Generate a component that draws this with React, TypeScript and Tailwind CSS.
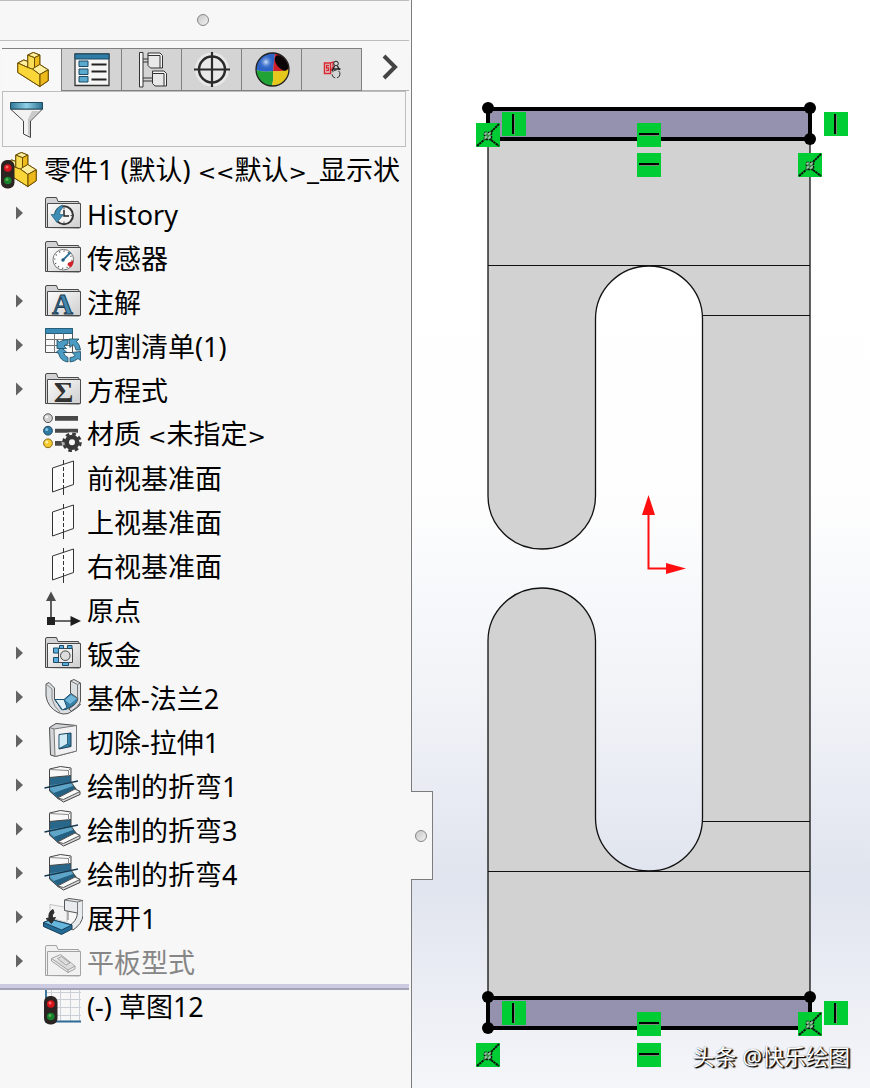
import { ReactNode, useState } from 'react'
import clsx from 'clsx'

type TreeItem = {
  label: string
  icon: ReactNode
  expandable?: boolean
  muted?: boolean
}

function Icon({ children, height = 44 }: { children: ReactNode; height?: number }) {
  return (
    <svg width="40" height={height} viewBox={`0 0 40 ${height}`} className="shrink-0" fill="none" aria-hidden="true">
      {children}
    </svg>
  )
}

function Folder({ children, faded }: { children: ReactNode; faded?: boolean }) {
  const stroke = faded ? '#a3a3a3' : '#4a4a4a'
  return (
    <Icon>
      <path d="M2.500 35.500V7q0-1.500 1.500-1.500h9.500l1.500 4h20.500l1 2.500v24z" fill={faded ? '#f0f0f0' : '#d3d3d5'} stroke={stroke} />
      <path d="M4.500 11.500H37.500V35.500H4.500z" fill={faded ? '#f1f1f1' : 'url(#folderFace)'} stroke={stroke} />
      {children}
    </Icon>
  )
}

function TrafficLight({ x, y }: { x: number; y: number }) {
  return (
    <g transform={`translate(${x} ${y})`}>
      <rect width="13.500" height="28.500" rx="6" fill="#2b2423" />
      <circle cx="6.800" cy="8" r="3.800" fill="#d8141c" />
      <circle cx="6" cy="7" r="1.500" fill="#ff6a66" />
      <circle cx="6.800" cy="20.500" r="3.800" fill="#17802a" />
      <circle cx="6" cy="19.500" r="1.500" fill="#55b058" />
    </g>
  )
}

function PartShape() {
  return (
    <g stroke="#6b4d00" strokeLinejoin="round">
      <path d="M3.800 11L9.800 8l4 1.500V3l5.500-2.500L25.800 3v9.500l8.400 5.300v11L25.800 34.500l-22-14z" fill="#f5c92c" />
      <path d="M3.800 11L9.800 8l4 1.500v6z" fill="#fff0a0" />
      <path d="M13.800 3l6.700 2.500v13.300L13.800 15.500z" fill="#f9dc55" />
      <path d="M20.500 5.500L25.800 3v9.500l-5.300 3.500z" fill="#eebb1c" />
      <path d="M13.800 3l5.500-2.500L25.800 3l-5.300 2.500z" fill="#fff0a0" />
      <path d="M18.300 17L25.800 12.500l8.400 5.300-8.400 4.700z" fill="#fff0a0" />
      <path d="M25.800 22.500l8.400-4.700v11L25.800 34.500z" fill="#edb81a" />
      <path d="M3.800 11l10 4.500 4.500 1.500 7.500 5.500v12l-22-14z" fill="#fbd638" />
    </g>
  )
}

function PlaneIcon() {
  return (
    <Icon>
      <path d="M9.500 12L30.500 5v23.500L9.500 36z" fill="#fcfcfc" stroke="#333" />
      <path d="M20.500 4v5M20.500 33v6" stroke="#333" />
      <path d="M20.500 11v22" stroke="#333" strokeDasharray="4 2" />
    </Icon>
  )
}

function BendIcon() {
  return (
    <Icon>
      <path d="M6.500 13L28 11v8l6 6.500L16 35.500 6.500 27z" fill="#2d7299" />
      <path d="M6.500 14l19-1.500 2.500-1V18l-21.500 3z" fill="#286789" />
      <path d="M6.500 21.500L28 18l3 4-20 7-4.500-4z" fill="#5ea5c8" />
      <path d="M11 29l19-7 4 3.500-18 9z" fill="#236082" />
      <path d="M6.500 5L17.500 2.500 28 4v7.500L6.500 13.500z" fill="#f8f8f8" stroke="#444" strokeLinejoin="round" />
      <path d="M6.500 5.500l19 1L28 4M25.500 6.500v5.500" stroke="#888" />
      <path d="M6.500 13v14l9 8M28 11.500V18l5 7" stroke="#444" />
      <path d="M14.500 34L32 25l5 2.500v3L20.500 38z" fill="#d8d8d8" stroke="#444" strokeLinejoin="round" />
      <path d="M14.500 34L32 25l5 2.500-16.500 8z" fill="#fafafa" stroke="#555" strokeLinejoin="round" />
      <path d="M1.500 24L35 17" stroke="#17384e" strokeWidth="1.300" />
    </Icon>
  )
}

const historyIcon = (
  <Folder>
    <circle cx="21" cy="23.300" r="9" fill="#f4f4f4" stroke="#343434" strokeWidth="2" />
    <path d="M21 15.500v2M21 29.500v2M27.500 23.500h2" stroke="#555" />
    <path d="M21 18v6h5" stroke="#222" strokeWidth="1.500" />
    <path d="M8 22.500h3.500q1.500-7 8-9.500 1 2-.5 3.500-2.500 2.500-2.500 6h4L14 30.500z" fill="#3d8db6" stroke="#22607f" strokeWidth=".7" />
  </Folder>
)

const sensorIcon = (
  <Folder>
    <circle cx="20.300" cy="23.700" r="10.300" fill="#fff" stroke="#777" />
    <circle cx="20.300" cy="23.700" r="8.500" stroke="#555" strokeWidth="1.500" strokeDasharray="1 3.450" />
    <path d="M25 27l5-2.500q1 4-2.500 7L24.500 29z" fill="#d3202a" />
    <path d="M20 24l7.500-7.500" stroke="#2c7198" strokeWidth="1.800" />
    <circle cx="20" cy="24" r="1.700" fill="#225c7e" />
  </Folder>
)

const annotationIcon = (
  <Folder>
    <text x="19.500" y="33.500" textAnchor="middle" fontFamily="Liberation Serif, serif" fontWeight="bold" fontSize="29" fill="#4188b0" stroke="#1d3c50">A</text>
  </Folder>
)

const cutListIcon = (
  <Icon>
    <path d="M2.500 4.500h27v24h-27z" fill="#fafafa" stroke="#555" />
    <path d="M2.500 4.500h27v5h-27z" fill="#3a8ab3" stroke="#255f7e" />
    <path d="M2.500 15.500h27M2.500 21.500h27M11.500 9.500v19M20.500 9.500v19" stroke="#777" />
    <g fill="#4b9bc2" stroke="#174963" strokeWidth=".8" strokeLinejoin="round">
      <path d="M26 15h10l-2.500 2.500q3.500 3 4 8.500h-4.500q-.5-3.500-3-5.500L27 23.500z" />
      <path d="M37.500 27.500v9l-2.500-2q-3 3-8 3.500v-4.500q3 0 5-2l-3-3z" />
      <path d="M25 38q-8-1-9.500-9l-2.500-.5 5.500-5 5.500 5H20.500q1 4 4.500 5z" />
      <path d="M25 15.500v4.500q-2.500.5-4 2l2.500 2.500H14V16l2.500 2q3.500-2.500 8.500-2.500z" />
    </g>
  </Icon>
)

const equationIcon = (
  <Folder>
    <text x="20.500" y="33.500" textAnchor="middle" fontFamily="Liberation Serif, serif" fontWeight="bold" fontSize="30" fill="#333">Σ</text>
  </Folder>
)

const materialIcon = (
  <Icon>
    <path d="M12 4h23v4.700H12zM12 16.700h23v4H12zM12 29h12v4.700H12z" fill="#484848" />
    <circle cx="5" cy="6.200" r="4.400" fill="#cfcfcf" stroke="#555" />
    <circle cx="5" cy="18.700" r="4.400" fill="#2e7ba4" stroke="#1c465f" />
    <circle cx="5" cy="31.300" r="4.400" fill="#f4c92f" stroke="#876a12" />
    <circle cx="3.700" cy="5" r="1.500" fill="#f5f5f5" />
    <circle cx="3.700" cy="17.500" r="1.500" fill="#86c2de" />
    <circle cx="3.700" cy="30" r="1.500" fill="#fff0a0" />
    <circle cx="29" cy="30.300" r="10.500" fill="#f7f7f7" opacity=".6" />
    <circle cx="29" cy="30.300" r="5.300" stroke="#383838" strokeWidth="4.600" />
    <circle cx="29" cy="30.300" r="8.500" stroke="#383838" strokeWidth="2.600" strokeDasharray="3.676 3" />
  </Icon>
)

const originIcon = (
  <Icon>
    <path d="M8 33V10M8 33h22" stroke="#3a3a3a" strokeWidth="1.600" />
    <path d="M8 3.500l5 9.500H3z" fill="#4b4b4b" />
    <path d="M38 33l-10.500 5V28z" fill="#1c1c1c" />
    <path d="M4 29h8v8H4z" fill="#222" />
  </Icon>
)

const sheetMetalIcon = (
  <Folder>
    <path d="M15.500 16.500h14v14h-14z" fill="#ededed" stroke="#444" />
    <g fill="#59aede" stroke="#1d4c68">
      <path d="M16.500 13.500h4v3h-4zM24.500 13.500h4.500v3h-4.500zM10.500 16h5v5h-5zM10.500 25.500h5v5h-5zM19.500 30.500h6v3h-6z" />
    </g>
    <circle cx="22.300" cy="23.700" r="4.800" fill="#ddd" stroke="#444" />
  </Folder>
)

const flangeIcon = (
  <Icon>
    <path d="M3 8l3-1.500L11.500 12v11.500L20 34l13-6h4.500q-1 3-12.500 9.500-5 1.500-10-1Q4.500 31 3 20z" fill="#dcdfe1" stroke="#555" strokeLinejoin="round" />
    <path d="M3 8l6 5v10q2 8 8 13" stroke="#888" />
    <path d="M12 23.500h9l7.500-6.500 7 4.500-.5 5L23 33.500h-4.500z" fill="#367fa8" stroke="#1e5270" strokeLinejoin="round" />
    <path d="M12 23.500h9l3 8-4.500 2.500z" fill="#e3f1f8" stroke="#1e5270" strokeLinejoin="round" />
    <path d="M22 24l6-5 6 3.500-7 5.500z" fill="#6fb6d8" />
    <path d="M27.500 5L31 3.500l6.500 3.500v18q-1 5-9 10l-3-2q9-5 9.500-10.500L27.500 17z" fill="#dcdfe1" stroke="#555" strokeLinejoin="round" />
    <path d="M27.500 5l7 3.500V22M34.500 8.500l3-1.500" stroke="#777" />
  </Icon>
)

const cutIcon = (
  <Icon>
    <path d="M6.500 7.500L13 3.500l20.500 2v25.500L12.500 36.500l-5-1.500z" fill="#d3d5d9" stroke="#4b4b4b" strokeLinejoin="round" />
    <path d="M11 9l22.500-3.500V31l-21.500 5.500z" fill="#f1f1f3" stroke="#777" strokeLinejoin="round" />
    <path d="M6.500 7.500L11 9" stroke="#777" />
    <path d="M16 14.500l12-1.500v13.500L16 29z" fill="#3986ae" stroke="#173f59" />
    <path d="M16.500 15l8-1v10l-8 4z" fill="#cfeaf5" />
    <path d="M24.500 14v10l3.500 2.500M24.500 24l-8 4.500" stroke="#173f59" strokeWidth=".7" />
  </Icon>
)

const unfoldIcon = (
  <Icon>
    <path d="M7 8.500l17 3v15L7 22z" fill="#f3f3f3" stroke="#c3c3c3" />
    <path d="M21.500 4L26 2.500l14 2v15Q39 28 30 34l-5-3.500q9-5 9.500-13.500l-13-2.500z" fill="#e9ecee" stroke="#555" strokeLinejoin="round" />
    <path d="M21.500 4l13 2 5-1.500M34.500 6v11M25 15v9" stroke="#777" />
    <path d="M.5 26.500L8 23.500l21 5.500v4L18.500 38.500.5 30.500z" fill="#236b94" stroke="#173f59" strokeLinejoin="round" />
    <path d="M.5 26.500L8 23.500l21 5.500-10.500 5z" fill="#67b6dd" stroke="#173f59" strokeLinejoin="round" />
    <path d="M10 13.500q-5 2.500-4 8.500l-3 .5 5.500 5 4-6-3 .5q-1-3 1.500-5.500z" fill="#2d2d2d" stroke="#2d2d2d" />
  </Icon>
)

const flatIcon = (
  <Folder faded>
    <path d="M8.500 18.500l9-4L32 26v3l-7 3.500L8.500 21z" fill="#e9e9e9" stroke="#a3a3a3" strokeLinejoin="round" />
    <path d="M8.500 18.500L25 30l7-4M25 30v2.500M14.500 18.500l4-2L27 23l-4 2z" stroke="#a3a3a3" strokeLinejoin="round" fill="#dcdcdc" />
  </Folder>
)

const items: TreeItem[] = [
  { label: 'History', icon: historyIcon, expandable: true },
  { label: '传感器', icon: sensorIcon },
  { label: '注解', icon: annotationIcon, expandable: true },
  { label: '切割清单(1)', icon: cutListIcon, expandable: true },
  { label: '方程式', icon: equationIcon, expandable: true },
  { label: '材质 <未指定>', icon: materialIcon },
  { label: '前视基准面', icon: <PlaneIcon /> },
  { label: '上视基准面', icon: <PlaneIcon /> },
  { label: '右视基准面', icon: <PlaneIcon /> },
  { label: '原点', icon: originIcon },
  { label: '钣金', icon: sheetMetalIcon, expandable: true },
  { label: '基体-法兰2', icon: flangeIcon, expandable: true },
  { label: '切除-拉伸1', icon: cutIcon, expandable: true },
  { label: '绘制的折弯1', icon: <BendIcon />, expandable: true },
  { label: '绘制的折弯3', icon: <BendIcon />, expandable: true },
  { label: '绘制的折弯4', icon: <BendIcon />, expandable: true },
  { label: '展开1', icon: unfoldIcon, expandable: true },
  { label: '平板型式', icon: flatIcon, expandable: true, muted: true },
]

const tabs = [
  { name: 'FeatureManager', icon: <PartShape /> },
  {
    name: 'PropertyManager',
    icon: (
      <>
        <path d="M1 2h34v31.500H1z" fill="#f5f5f5" stroke="#333" strokeWidth="1.300" />
        <path d="M1 2h34v5H1z" fill="#2f7da6" stroke="#1e4a63" />
        <path d="M5 9h9v5.500H5zM5 17h9v5.500H5zM5 24.500h9V30H5z" fill="#5aa9cf" stroke="#1e4a63" />
        <path d="M17.500 12.500h15M17.500 19.500h15M17.500 27.500h15" stroke="#222" strokeWidth="1.800" />
      </>
    ),
  },
  {
    name: 'ConfigurationManager',
    icon: (
      <g stroke="#333" strokeLinejoin="round">
        <path d="M5.500 .5h3.500v34.500H5.500z" fill="#fafafa" />
        <path d="M9 7h5M9 10h5M9 26h10M9 29h10" />
        <path d="M14 3.500V1h12l2.500 2.500V16H26z" fill="#f5f5f5" />
        <path d="M14 3.500h12V16H16.500L14 13.500z" fill="#e8e8e8" />
        <path d="M18.500 21.500V19H30l2.500 2.500V34H30z" fill="#f5f5f5" />
        <path d="M18.500 21.500H30V34H21l-2.500-2.500z" fill="#e8e8e8" />
      </g>
    ),
  },
  {
    name: 'DimXpertManager',
    icon: (
      <>
        <circle cx="18" cy="17.500" r="17" fill="#e8e8e8" />
        <circle cx="18" cy="17.500" r="13" stroke="#2a2a2a" strokeWidth="2.500" />
        <path d="M18 0v35M0 17.500h36" stroke="#2a2a2a" strokeWidth="2.200" />
      </>
    ),
  },
  {
    name: 'DisplayManager',
    icon: (
      <>
        <path d="M19 19L21 1A16.500 16.500 0 0 0 2 18q8 3 17 1z" fill="#2c63c4" />
        <path d="M19 19L21 1a16.500 16.500 0 0 1 14 16q-7 3-16 2z" fill="#cf1f2b" />
        <path d="M19 19Q10 21 2 18q1 15 16 16.300 2-7 1-15.300z" fill="#21a336" />
        <path d="M19 19q9 1 16-2 0 15-17 17.300 2-7 1-15.300z" fill="#e6c81c" />
        <ellipse cx="27.500" cy="11" rx="5" ry="9" transform="rotate(-38 27.500 11)" fill="#0c0505" />
        <circle cx="12" cy="10" r="7.500" fill="url(#ballShine)" />
        <circle cx="18.500" cy="17.500" r="16.500" stroke="#222" strokeWidth="1.300" />
      </>
    ),
  },
  {
    name: 'CAM',
    icon: (
      <>
        <path d="M10.500 11h6v10.500h-6z" stroke="#dd2830" strokeWidth="1.500" />
        <path d="M15 13.500h-2.500V16h2v2.500h-2.500M16.500 11l2.500-1v5l-2.500 4" stroke="#dd2830" strokeWidth="1.300" />
        <circle cx="22" cy="11.500" r="2.300" stroke="#222" />
        <path d="M20.500 14l-2.500 5M23.500 14l2 4M18.500 17h8" stroke="#222" strokeWidth="1.300" />
        <circle cx="22" cy="22" r="4" stroke="#333" strokeDasharray="5 2" />
      </>
    ),
  },
]

function GripDot() {
  return <span className="block size-3 rounded-full border border-[#858585] bg-gradient-to-br from-[#c8c8c8] to-[#f1f1f1]" />
}

// angle brackets are set in a wider face than the rest of the label
function Label({ text }: { text: string }) {
  return (
    <>
      {text.split(/([<>]+)/).map((part, i) =>
        /[<>]/.test(part) ? (
          <span key={i} className="font-['DejaVu_Sans',sans-serif] text-[22px]">{part}</span>
        ) : (
          part
        )
      )}
    </>
  )
}

function TreeRow({ item }: { item: TreeItem }) {
  return (
    <li className="flex h-11 items-center">
      <div className="flex w-[43px] shrink-0 pl-4">
        {item.expandable && (
          <button type="button" aria-label={`展开 ${item.label}`} className="pb-0.5">
            <svg width="7" height="14" viewBox="0 0 7 14" aria-hidden="true">
              <path d="M0 0.500L7 7L0 13.500z" fill="#646464" />
            </svg>
          </button>
        )}
      </div>
      {item.icon}
      <span className={clsx('ml-1 pt-0.5 whitespace-nowrap', item.muted && 'text-[#868686]')}>
        <Label text={item.label} />
      </span>
    </li>
  )
}

function Relation({ x, y, kind }: { x: number; y: number; kind: 'v' | 'h' | 'x' }) {
  return (
    <g transform={`translate(${x} ${y})`}>
      <rect width="24" height="24" fill="#00cc33" />
      {kind === 'v' && (
        <>
          <path d="M12.500 3v20" stroke="#7a8c7a" />
          <path d="M11 2v20" stroke="#000" strokeWidth="2" />
        </>
      )}
      {kind === 'h' && (
        <>
          <path d="M3 12.500h19" stroke="#7a8c7a" />
          <path d="M2 11h20" stroke="#000" strokeWidth="2" />
        </>
      )}
      {kind === 'x' && (
        <>
          <path d="M1 23l7-6M15 9l8-8M15 17l8 6" stroke="#111" strokeWidth="2" strokeDasharray="2.500 .5" />
          <path d="M8.500 9.500h7v7h-7z" fill="#3c8c4e" stroke="#111" strokeWidth="1.500" strokeDasharray="2.500 1" />
          <path d="M8 11h8M8 15h8M10 9v8M14 9v8" stroke="#c9e8cf" strokeDasharray="2 2" />
        </>
      )}
    </g>
  )
}

function Drawing() {
  return (
    <svg viewBox="412 0 458 1088" className="block w-full" fill="none" role="img" aria-label="钣金零件">
      <path
        d="M488 139H810V997H488V641A53.750 53 0 0 1 595.500 641V818A53.500 53 0 0 0 702.500 818V319A53.500 53 0 0 0 595.500 319V496A53.750 53 0 0 1 488 496z"
        fill="#d2d2d2"
        stroke="#111"
        strokeWidth="1.300"
      />
      <path d="M488 265.500H810M702.500 315.500H810M702.500 821.500H810M488 871.500H810" stroke="#111" strokeWidth="1.200" />
      <rect x="488" y="109" width="322" height="30" fill="#9492af" stroke="#000" strokeWidth="4" />
      <rect x="488" y="998" width="322" height="30" fill="#9492af" stroke="#000" strokeWidth="4" />
      <g fill="#000">
        <circle cx="488" cy="108" r="6" />
        <circle cx="810" cy="108" r="6" />
        <circle cx="810" cy="139" r="6" />
        <circle cx="488" cy="997" r="6" />
        <circle cx="488" cy="1028" r="6" />
        <circle cx="810" cy="997" r="6" />
      </g>
      <path d="M648.500 512V568.500H668" stroke="#ff0f0f" strokeWidth="2" />
      <path d="M648.500 495L655 515H642zM686 568.500L666 574V563z" fill="#ff0f0f" />
      <Relation x={476} y={123} kind="x" />
      <Relation x={502} y={112} kind="v" />
      <Relation x={637} y={123} kind="h" />
      <Relation x={637} y={153} kind="h" />
      <Relation x={824} y={112} kind="v" />
      <Relation x={798} y={153} kind="x" />
      <Relation x={502} y={1001} kind="v" />
      <Relation x={476} y={1043} kind="x" />
      <Relation x={637} y={1012} kind="h" />
      <Relation x={637} y={1043} kind="h" />
      <Relation x={798} y={1012} kind="x" />
      <Relation x={824} y={1001} kind="v" />
    </svg>
  )
}

export default function App() {
  const [active, setActive] = useState(0)

  return (
    <div className="flex min-h-screen bg-white font-['Noto_Sans','Noto_Sans_CJK_SC',sans-serif] text-black">
      <svg width="0" height="0" className="absolute" aria-hidden="true">
        <defs>
          <linearGradient id="folderFace" x1="0" y1="0" x2="1" y2="1">
            <stop offset="0" stopColor="#fbfbfb" />
            <stop offset="1" stopColor="#cfcfcf" />
          </linearGradient>
          <radialGradient id="ballShine">
            <stop offset="0" stopColor="#d5e6ff" />
            <stop offset="1" stopColor="#2c63c4" stopOpacity="0" />
          </radialGradient>
          <linearGradient id="funnelTop">
            <stop offset="0" stopColor="#2f7899" />
            <stop offset=".5" stopColor="#8fd0e6" />
            <stop offset="1" stopColor="#2a708f" />
          </linearGradient>
        </defs>
      </svg>

      <aside className="relative z-10 w-[412px] shrink-0 border-r border-[#7c7c7c] bg-[#f7f7f7] pr-0.5">
        <div className="flex h-[41px] items-center justify-center border-y border-[#bcbcbc] pr-1 pb-0.5">
          <GripDot />
        </div>

        <div role="tablist" className="mt-[7px] flex h-[43px] pl-0.5">
          {tabs.map((tab, i) => (
            <button
              key={tab.name}
              type="button"
              role="tab"
              aria-label={tab.name}
              aria-selected={i === active}
              onClick={() => setActive(i)}
              className={clsx(
                'flex w-[60px] items-center justify-center border-t border-r border-[#808080]',
                i === active ? 'bg-[#f8f8f8]' : 'border-b bg-[#d4d4d4]'
              )}
            >
              <svg width="36" height="36" viewBox="0 0 36 36" fill="none" aria-hidden="true">
                {tab.icon}
              </svg>
            </button>
          ))}
          <button type="button" aria-label="更多" className="flex flex-1 items-center justify-center border-b border-[#b0b0b0] pb-1 pl-2">
            <svg width="16" height="26" viewBox="0 0 16 26" fill="none" aria-hidden="true">
              <path d="M2 2l11 11L2 24" stroke="#444" strokeWidth="4" />
            </svg>
          </button>
        </div>

        <label className="mr-[3px] ml-0.5 flex h-14 items-center border border-[#bdbdbd] pt-1 pl-1.5">
          <svg width="36" height="40" viewBox="0 0 36 40" fill="none" aria-hidden="true">
            <path d="M1.500 8h32L21.500 20v16.500l-7-3.500V20z" fill="#f2f2f2" stroke="#444" strokeLinejoin="round" />
            <path d="M23 10h7l-9 9.500V35l-2-1V18z" fill="#c9c9c9" />
            <path d="M1.500 1.500h32V8h-32z" fill="url(#funnelTop)" stroke="#1e4a5e" />
          </svg>
          <input type="text" aria-label="过滤" className="h-full min-w-0 flex-1 bg-transparent px-2 text-[27px] outline-none" />
        </label>

        <ul className="mt-px text-[27px] leading-[44px]">
          <li className="flex h-11 items-center overflow-hidden">
            <svg width="40" height="44" viewBox="0 0 40 44" className="shrink-0" fill="none" aria-hidden="true">
              <g transform="translate(2 4)">
                <PartShape />
              </g>
              <TrafficLight x={1} y={12} />
            </svg>
            <span className="ml-1 pt-0.5 whitespace-nowrap">
              <Label text="零件1 (默认) <<默认>_显示状" />
            </span>
          </li>
          {items.map(item => (
            <TreeRow key={item.label} item={item} />
          ))}
          <li role="separator" className="h-1.5 border-b-2 border-[#a5a3b8] bg-[#cdcbe2]" />
          <li className="flex h-9 items-center pl-[43px]">
            <Icon height={36}>
              <path d="M3 2.500h35M3 9.500h35M3 17.500h35M3 25.500h35M8.500 0v31M17.500 0v31M27.500 0v31M36.500 0v31" stroke="#cbcfd6" />
              <path d="M3 0v31.500h35" stroke="#2c6a93" strokeWidth="1.800" />
              <TrafficLight x={1} y={6} />
            </Icon>
            <span className="ml-1 pb-0.5 whitespace-nowrap">(-) 草图12</span>
          </li>
        </ul>

        <button
          type="button"
          aria-label="收起面板"
          className="absolute top-[791px] left-[411px] flex h-[89px] w-[22px] items-center border border-l-0 border-[#7c7c7c] bg-[#f7f7f7] pl-1"
        >
          <GripDot />
        </button>
      </aside>

      <main className="relative min-w-0 flex-1 bg-[linear-gradient(to_bottom,#ffffff_0%,#fefefe_45%,#f0f2f7_65%,#e0e4ee_81%,#f5f6fa_100%)]">
        <Drawing />
        <p className="absolute right-5 bottom-4 text-[22px] leading-8 whitespace-nowrap text-white [text-shadow:1px_1px_1px_#000,2px_1px_1px_#222,0_0_1px_#666]">
          头条 @快乐绘图
        </p>
      </main>
    </div>
  )
}
